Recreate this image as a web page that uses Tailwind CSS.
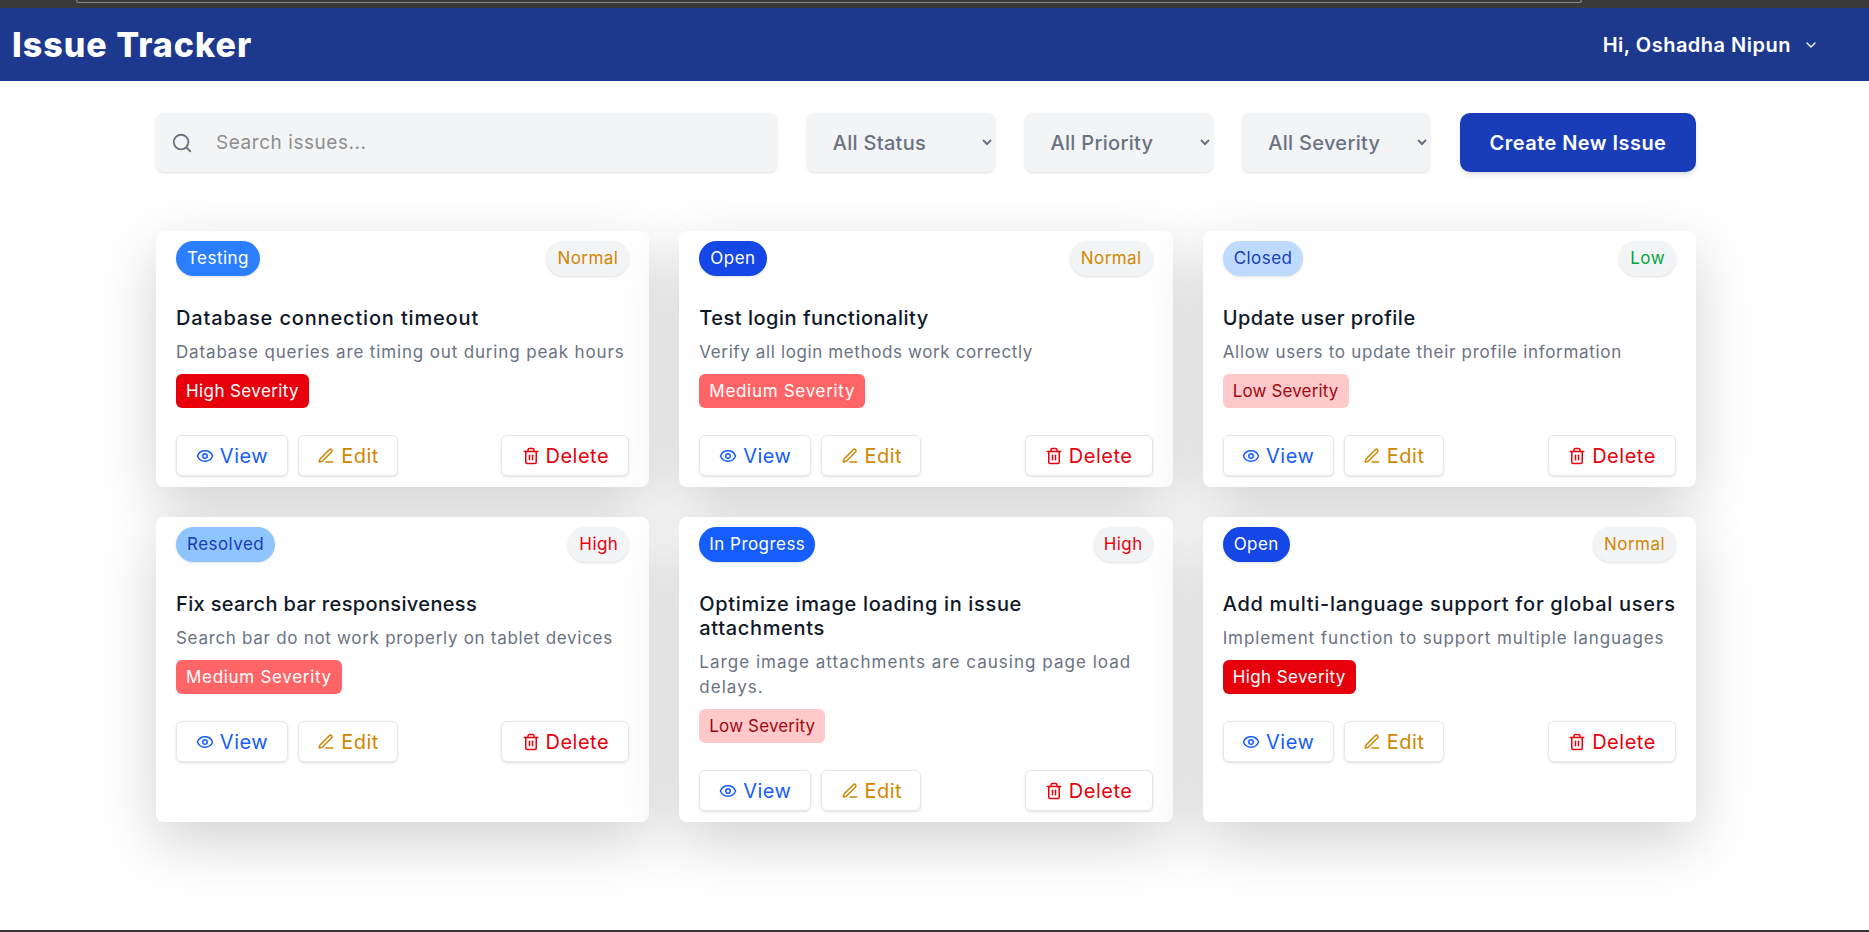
<!DOCTYPE html>
<html lang="en">
  <head>
    <meta charset="UTF-8">
    <meta name="viewport" content="width=device-width, initial-scale=1.0">
    <title>Issue Tracker</title>
    <script src="https://cdn.jsdelivr.net/npm/@tailwindcss/browser@4"></script>
  </head>

  <body class="bg-white h-[932px] overflow-hidden flex flex-col font-['Inter',sans-serif]">

    <!-- icons -->
    <svg class="hidden">
      <symbol id="eye" viewBox="0 0 24 24" fill="none" stroke="currentColor" stroke-width="2" stroke-linecap="round" stroke-linejoin="round">
        <path d="M2.06 12.35a1 1 0 0 1 0-.7 10.75 10.75 0 0 1 19.88 0 1 1 0 0 1 0 .7 10.75 10.75 0 0 1-19.88 0"/><circle cx="12" cy="12" r="3"/>
      </symbol>
      <symbol id="pen" viewBox="0 0 24 24" fill="none" stroke="currentColor" stroke-width="2" stroke-linecap="round" stroke-linejoin="round">
        <path d="M12 20h9"/><path d="M16.38 3.62a1 1 0 0 1 3 3L7.37 18.64a2 2 0 0 1-.85.5l-2.87.84a.5.5 0 0 1-.62-.62l.84-2.87a2 2 0 0 1 .5-.85z"/>
      </symbol>
      <symbol id="trash" viewBox="0 0 24 24" fill="none" stroke="currentColor" stroke-width="2" stroke-linecap="round" stroke-linejoin="round">
        <path d="M3 6h18"/><path d="M19 6v14a2 2 0 0 1-2 2H7a2 2 0 0 1-2-2V6"/><path d="M8 6V4a2 2 0 0 1 2-2h4a2 2 0 0 1 2 2v2"/><path d="M10 11v6"/><path d="M14 11v6"/>
      </symbol>
    </svg>

    <!-- browser chrome strip -->
    <div class="h-2 bg-[#3a3a3a] shrink-0 pl-[76px]">
      <div class="w-[1506px] h-[3px] border-b border-x border-[#8a8a8a] rounded-b-lg"></div>
    </div>

    <!-- Navbar -->
    <header class="h-[73px] bg-[#1c398e] shrink-0 flex items-center justify-between pl-3 pr-[50px] text-white">
      <h1 class="text-[34px] font-extrabold tracking-[1px]">Issue Tracker</h1>
      <div class="flex items-center gap-[12px]">
        <span class="text-[20px] font-semibold tracking-[.5px]">Hi, Oshadha Nipun</span>
        <svg class="w-4 h-4" viewBox="0 0 24 24" fill="none" stroke="currentColor" stroke-width="2" stroke-linecap="round" stroke-linejoin="round"><path d="m6 9 6 6 6-6"/></svg>
      </div>
    </header>

    <main class="flex-1 w-[1540px] ml-[156px]">
      <!-- Filters -->
      <div class="mt-[32px] flex h-[59px] gap-[29.75px]">
        <div class="w-[621px] bg-gray-100 rounded-lg shadow-sm flex items-center pl-[15px] gap-[23px]">
          <svg class="w-[22px] h-[22px] text-gray-500" viewBox="0 0 24 24" fill="none" stroke="currentColor" stroke-width="2" stroke-linecap="round" stroke-linejoin="round"><circle cx="11" cy="11" r="8"/><path d="m21 21-4.3-4.3"/></svg>
          <input class="flex-1 bg-transparent outline-none pt-px text-[19px] tracking-[.55px] placeholder:text-[#8e8e8e]" placeholder="Search issues...">
        </div>
        <select class="w-[188px] bg-gray-100 rounded-lg shadow-sm pl-[22px] text-[20px] tracking-[.3px] font-medium text-gray-500"><option>All Status</option></select>
        <select class="w-[188px] bg-gray-100 rounded-lg shadow-sm pl-[22px] text-[20px] tracking-[.3px] font-medium text-gray-500"><option>All Priority</option></select>
        <select class="w-[188px] bg-gray-100 rounded-lg shadow-sm pl-[22px] text-[20px] tracking-[.3px] font-medium text-gray-500"><option>All Severity</option></select>
        <button class="w-[236px] bg-[#193cb8] rounded-[10px] shadow-md text-white text-[20px] tracking-[.45px] font-semibold">Create New Issue</button>
      </div>

      <!-- Issues -->
      <div class="mt-[59px] grid grid-cols-3 gap-[30px] text-[17px] tracking-[.45px]">

        <div class="bg-white rounded-lg shadow-[0_20px_60px_rgba(0,0,0,0.18)] px-5 pt-[10px] pb-[11px]">
          <div class="flex items-center justify-between">
            <span class="h-[35px] px-[11px] flex items-center rounded-full shadow-sm bg-[#2b7fff] text-white">Testing</span>
            <span class="h-[35px] px-[11px] flex items-center rounded-full shadow-sm bg-gray-100 text-[#d08700]">Normal</span>
          </div>
          <h3 class="mt-[30px] text-[20px] tracking-[.84px] leading-6 font-medium text-gray-900">Database connection timeout</h3>
          <p class="mt-[10px] leading-[25px] tracking-[.85px] text-gray-500">Database queries are timing out during peak hours</p>
          <span class="mt-[9px] pt-[2px] h-[34px] w-fit px-[10px] flex items-center rounded-md tracking-[.4px] bg-[#e7000b] text-white">High Severity</span>
          <div class="mt-[27px] flex items-center gap-[10px] text-[20px] tracking-[.5px]">
            <button class="w-[112px] h-[41px] flex items-center justify-center gap-[6px] rounded-md border border-gray-200 shadow-sm text-[#155dfc]"><svg class="w-[18px] h-[18px]"><use href="#eye"/></svg>View</button>
            <button class="w-[100px] h-[41px] flex items-center justify-center gap-[6px] rounded-md border border-gray-200 shadow-sm text-[#d08700]"><svg class="w-[18px] h-[18px]"><use href="#pen"/></svg>Edit</button>
            <button class="ml-auto w-[128px] h-[41px] flex items-center justify-center gap-[6px] rounded-md border border-gray-200 shadow-sm text-[#e7000b]"><svg class="w-[18px] h-[18px]"><use href="#trash"/></svg>Delete</button>
          </div>
        </div>

        <div class="bg-white rounded-lg shadow-[0_20px_60px_rgba(0,0,0,0.18)] px-5 pt-[10px] pb-[11px]">
          <div class="flex items-center justify-between">
            <span class="h-[35px] px-[11px] flex items-center rounded-full shadow-sm bg-[#1447e6] text-white">Open</span>
            <span class="h-[35px] px-[11px] flex items-center rounded-full shadow-sm bg-gray-100 text-[#d08700]">Normal</span>
          </div>
          <h3 class="mt-[30px] text-[20px] tracking-[.5px] leading-6 font-medium text-gray-900">Test login functionality</h3>
          <p class="mt-[10px] leading-[25px] tracking-[.62px] text-gray-500">Verify all login methods work correctly</p>
          <span class="mt-[9px] pt-[2px] h-[34px] w-fit px-[10px] flex items-center rounded-md tracking-[.7px] bg-[#ff6467] text-white">Medium Severity</span>
          <div class="mt-[27px] flex items-center gap-[10px] text-[20px] tracking-[.5px]">
            <button class="w-[112px] h-[41px] flex items-center justify-center gap-[6px] rounded-md border border-gray-200 shadow-sm text-[#155dfc]"><svg class="w-[18px] h-[18px]"><use href="#eye"/></svg>View</button>
            <button class="w-[100px] h-[41px] flex items-center justify-center gap-[6px] rounded-md border border-gray-200 shadow-sm text-[#d08700]"><svg class="w-[18px] h-[18px]"><use href="#pen"/></svg>Edit</button>
            <button class="ml-auto w-[128px] h-[41px] flex items-center justify-center gap-[6px] rounded-md border border-gray-200 shadow-sm text-[#e7000b]"><svg class="w-[18px] h-[18px]"><use href="#trash"/></svg>Delete</button>
          </div>
        </div>

        <div class="bg-white rounded-lg shadow-[0_20px_60px_rgba(0,0,0,0.18)] px-5 pt-[10px] pb-[11px]">
          <div class="flex items-center justify-between">
            <span class="h-[35px] px-[11px] flex items-center rounded-full shadow-sm bg-[#bedbff] text-[#193cb8]">Closed</span>
            <span class="h-[35px] px-[11px] flex items-center rounded-full shadow-sm bg-gray-100 text-[#00a63e]">Low</span>
          </div>
          <h3 class="mt-[30px] text-[20px] tracking-[.5px] leading-6 font-medium text-gray-900">Update user profile</h3>
          <p class="mt-[10px] leading-[25px] tracking-[.7px] text-gray-500">Allow users to update their profile information</p>
          <span class="mt-[9px] pt-[2px] h-[34px] w-fit px-[10px] flex items-center rounded-md tracking-[.15px] bg-[#ffc9c9] text-[#9f0712]">Low Severity</span>
          <div class="mt-[27px] flex items-center gap-[10px] text-[20px] tracking-[.5px]">
            <button class="w-[111px] h-[41px] flex items-center justify-center gap-[6px] rounded-md border border-gray-200 shadow-sm text-[#155dfc]"><svg class="w-[18px] h-[18px]"><use href="#eye"/></svg>View</button>
            <button class="w-[100px] h-[41px] flex items-center justify-center gap-[6px] rounded-md border border-gray-200 shadow-sm text-[#d08700]"><svg class="w-[18px] h-[18px]"><use href="#pen"/></svg>Edit</button>
            <button class="ml-auto w-[128px] h-[41px] flex items-center justify-center gap-[6px] rounded-md border border-gray-200 shadow-sm text-[#e7000b]"><svg class="w-[18px] h-[18px]"><use href="#trash"/></svg>Delete</button>
          </div>
        </div>

        <div class="bg-white rounded-lg shadow-[0_20px_60px_rgba(0,0,0,0.18)] px-5 pt-[10px] pb-[11px]">
          <div class="flex items-center justify-between">
            <span class="h-[35px] px-[11px] flex items-center rounded-full shadow-sm bg-[#8ec5ff] text-[#193cb8]">Resolved</span>
            <span class="h-[35px] px-[11px] flex items-center rounded-full shadow-sm bg-gray-100 text-[#e7000b]">High</span>
          </div>
          <h3 class="mt-[30px] text-[20px] tracking-[.35px] leading-6 font-medium text-gray-900">Fix search bar responsiveness</h3>
          <p class="mt-[10px] leading-[25px] tracking-[.7px] text-gray-500">Search bar do not work properly on tablet devices</p>
          <span class="mt-[9px] pt-[2px] h-[34px] w-fit px-[10px] flex items-center rounded-md tracking-[.7px] bg-[#ff6467] text-white">Medium Severity</span>
          <div class="mt-[27px] flex items-center gap-[10px] text-[20px] tracking-[.5px]">
            <button class="w-[112px] h-[41px] flex items-center justify-center gap-[6px] rounded-md border border-gray-200 shadow-sm text-[#155dfc]"><svg class="w-[18px] h-[18px]"><use href="#eye"/></svg>View</button>
            <button class="w-[100px] h-[41px] flex items-center justify-center gap-[6px] rounded-md border border-gray-200 shadow-sm text-[#d08700]"><svg class="w-[18px] h-[18px]"><use href="#pen"/></svg>Edit</button>
            <button class="ml-auto w-[128px] h-[41px] flex items-center justify-center gap-[6px] rounded-md border border-gray-200 shadow-sm text-[#e7000b]"><svg class="w-[18px] h-[18px]"><use href="#trash"/></svg>Delete</button>
          </div>
        </div>

        <div class="bg-white rounded-lg shadow-[0_20px_60px_rgba(0,0,0,0.18)] px-5 pt-[10px] pb-[11px]">
          <div class="flex items-center justify-between">
            <span class="h-[35px] px-[10px] flex items-center rounded-full shadow-sm bg-[#155dfc] text-white">In Progress</span>
            <span class="h-[35px] px-[10px] flex items-center rounded-full shadow-sm bg-gray-100 text-[#e7000b]">High</span>
          </div>
          <h3 class="mt-[30px] text-[20px] tracking-[.65px] leading-6 font-medium text-gray-900">Optimize image loading in issue<br>attachments</h3>
          <p class="mt-[10px] leading-[25px] tracking-[1.03px] text-gray-500">Large image attachments are causing page load<br>delays.</p>
          <span class="mt-[9px] pt-[2px] h-[34px] w-fit px-[10px] flex items-center rounded-md tracking-[.15px] bg-[#ffc9c9] text-[#9f0712]">Low Severity</span>
          <div class="mt-[27px] flex items-center gap-[10px] text-[20px] tracking-[.5px]">
            <button class="w-[112px] h-[41px] flex items-center justify-center gap-[6px] rounded-md border border-gray-200 shadow-sm text-[#155dfc]"><svg class="w-[18px] h-[18px]"><use href="#eye"/></svg>View</button>
            <button class="w-[100px] h-[41px] flex items-center justify-center gap-[6px] rounded-md border border-gray-200 shadow-sm text-[#d08700]"><svg class="w-[18px] h-[18px]"><use href="#pen"/></svg>Edit</button>
            <button class="ml-auto w-[128px] h-[41px] flex items-center justify-center gap-[6px] rounded-md border border-gray-200 shadow-sm text-[#e7000b]"><svg class="w-[18px] h-[18px]"><use href="#trash"/></svg>Delete</button>
          </div>
        </div>

        <div class="bg-white rounded-lg shadow-[0_20px_60px_rgba(0,0,0,0.18)] px-5 pt-[10px] pb-[11px]">
          <div class="flex items-center justify-between">
            <span class="h-[35px] px-[11px] flex items-center rounded-full shadow-sm bg-[#1447e6] text-white">Open</span>
            <span class="h-[35px] px-[11px] flex items-center rounded-full shadow-sm bg-gray-100 text-[#d08700]">Normal</span>
          </div>
          <h3 class="mt-[30px] text-[20px] tracking-[.7px] leading-6 font-medium text-gray-900 whitespace-nowrap">Add multi-language support for global users</h3>
          <p class="mt-[10px] leading-[25px] tracking-[.9px] text-gray-500">Implement function to support multiple languages</p>
          <span class="mt-[9px] pt-[2px] h-[34px] w-fit px-[10px] flex items-center rounded-md tracking-[.4px] bg-[#e7000b] text-white">High Severity</span>
          <div class="mt-[27px] flex items-center gap-[10px] text-[20px] tracking-[.5px]">
            <button class="w-[111px] h-[41px] flex items-center justify-center gap-[6px] rounded-md border border-gray-200 shadow-sm text-[#155dfc]"><svg class="w-[18px] h-[18px]"><use href="#eye"/></svg>View</button>
            <button class="w-[100px] h-[41px] flex items-center justify-center gap-[6px] rounded-md border border-gray-200 shadow-sm text-[#d08700]"><svg class="w-[18px] h-[18px]"><use href="#pen"/></svg>Edit</button>
            <button class="ml-auto w-[128px] h-[41px] flex items-center justify-center gap-[6px] rounded-md border border-gray-200 shadow-sm text-[#e7000b]"><svg class="w-[18px] h-[18px]"><use href="#trash"/></svg>Delete</button>
          </div>
        </div>

      </div>
    </main>

    <div class="h-[2px] bg-[#333] shrink-0"></div>
  </body>
</html>
